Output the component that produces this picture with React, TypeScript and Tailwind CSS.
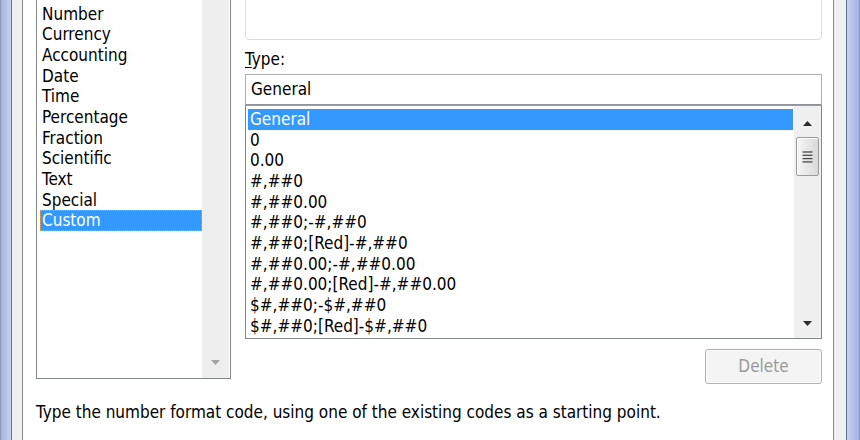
import React from "react";

const categories = [
  "Number",
  "Currency",
  "Accounting",
  "Date",
  "Time",
  "Percentage",
  "Fraction",
  "Scientific",
  "Text",
  "Special",
  "Custom",
];

const formats = [
  "General",
  "0",
  "0.00",
  "#,##0",
  "#,##0.00",
  "#,##0;-#,##0",
  "#,##0;[Red]-#,##0",
  "#,##0.00;-#,##0.00",
  "#,##0.00;[Red]-#,##0.00",
  "$#,##0;-$#,##0",
  "$#,##0;[Red]-$#,##0",
];

const Arrow = ({ dir, disabled }: { dir: "up" | "down"; disabled?: boolean }) => (
  <svg width="9" height="5" viewBox="0 0 9 5">
    <polygon
      points={dir === "up" ? "0,5 4.5,0 9,5" : "0,0 4.5,5 9,0"}
      fill={disabled ? "#a3a3a3" : "#2b2b2b"}
    />
  </svg>
);

const Gripper = () => (
  <svg width="11" height="12" viewBox="0 0 11 12">
    {[1, 4.3, 7.6, 10.9].map((y) => (
      <line key={y} x1="0.5" x2="10.5" y1={y} y2={y} stroke="#4a4a4a" strokeWidth="1.3" />
    ))}
  </svg>
);

const Frame = ({ side }: { side: "left" | "right" }) =>
  side === "left" ? (
    <div className="flex shrink-0">
      <div className="w-px bg-[#8b98b5]" />
      <div className="w-[10px] bg-linear-to-r from-[#a3b3e0] to-[#c7d2f0]" />
      <div className="w-px bg-[#65728f]" />
      <div className="w-[10px] bg-[#f0f0f0]" />
    </div>
  ) : (
    <div className="flex shrink-0">
      <div className="w-[12px] bg-[#f0f0f0]" />
      <div className="w-px bg-[#65728f]" />
      <div className="w-[12px] bg-linear-to-r from-[#c7d2f0] to-[#a3b3e0]" />
      <div className="w-px bg-[#8b98b5]" />
    </div>
  );

export default function App() {
  return (
    <div className="w-[860px] h-[440px] overflow-hidden flex bg-white text-black text-[17px] leading-[20.67px] font-['DejaVu_Sans_Condensed','DejaVu_Sans',sans-serif]">
      <Frame side="left" />

      {/* Tab page */}
      <div className="flex-1 flex flex-col border-x border-[#898c95] bg-white pl-[13px] pr-[11px]">
        <div className="flex items-start gap-[14px]">
          {/* Category list */}
          <div className="w-[195px] h-[383px] -mt-[4px] shrink-0 flex border border-[#828790] bg-white">
            <div className="flex-1 pt-[6.67px] pl-[3px]">
              {categories.map((c) => (
                <div
                  key={c}
                  className={`h-[20.67px] whitespace-nowrap ${
                    c === "Custom"
                      ? "bg-[#3399ff] text-white border border-dotted border-[#f0a050] pl-px leading-[18.67px]"
                      : "pl-[2px]"
                  }`}>
                  {c}
                </div>
              ))}
            </div>
            <div className="w-[27px] mr-px flex flex-col justify-end bg-[#eeeeee]">
              <div className="h-[31px] flex items-center justify-center pb-[1px]">
                <Arrow dir="down" disabled />
              </div>
            </div>
          </div>

          {/* Right column */}
          <div className="flex-1 flex flex-col">
            {/* Sample group */}
            <div className="h-[80px] -mt-[40px] rounded-[4px] border border-[#d5dfe5] shadow-[inset_1px_1px_0_#ffffff]" />

            <div className="mt-[9px] mb-[5px] leading-[20px]">
              <span className="underline underline-offset-2">T</span>ype:
            </div>

            <div className="h-[31px] flex items-center pl-[5px] border border-[#abadb3] border-b-[#8f939c]">
              General
            </div>

            {/* Format list */}
            <div className="h-[234px] flex border border-[#828790] border-t-[#9a9da5] bg-white overflow-hidden">
              <div className="flex-1 pt-[3px] pl-[2px]">
                {formats.map((f, i) => (
                  <div
                    key={f}
                    className={`h-[20.67px] pl-[2px] whitespace-nowrap ${i === 0 ? "bg-[#3399ff] text-white" : ""}`}>
                    {f}
                  </div>
                ))}
              </div>
              <div className="w-[27px] ml-px flex flex-col bg-[#f0f0f0]">
                <div className="h-[31px] pt-[4px] flex items-center justify-center">
                  <Arrow dir="up" />
                </div>
                <div className="h-[39px] ml-[2px] mr-[2px] rounded-[2px] border border-[#9b9b9b] bg-linear-to-r from-[#f6f6f6] to-[#d9d9d9] flex items-center justify-center shadow-[inset_1px_1px_0_#ffffff]">
                  <Gripper />
                </div>
                <div className="flex-1" />
                <div className="h-[30px] flex items-center justify-center">
                  <Arrow dir="down" />
                </div>
              </div>
            </div>

            <button
              disabled
              className="self-end mt-[10px] w-[117px] h-[35px] rounded-[3px] border border-[#adb2b5] bg-[#f4f4f4] text-[#9a9a9a] shadow-[inset_0_0_0_1px_#fcfcfc]">
              Delete
            </button>
          </div>
        </div>

        <p className="mt-[18px] whitespace-nowrap">
          Type the number format code, using one of the existing codes as a starting point.
        </p>
      </div>

      <Frame side="right" />
    </div>
  );
}
